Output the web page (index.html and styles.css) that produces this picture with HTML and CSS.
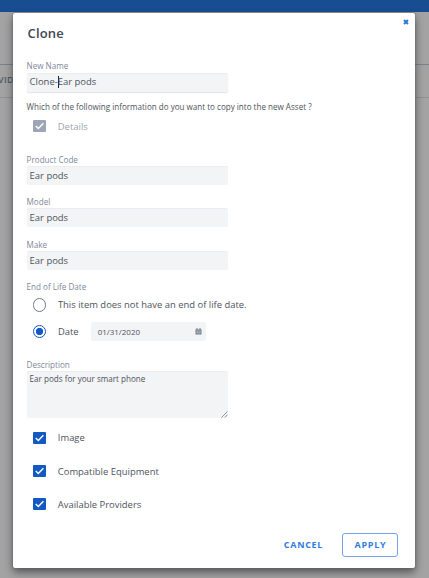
FILE: index.html
```html
<!DOCTYPE html>
<html lang="en">
<head>
<meta charset="utf-8">
<title>Clone</title>
<link rel="stylesheet" href="styles.css">
</head>
<body>
<div class="page">
  <div class="topbar"></div>
  <div class="subbar"></div>
  <div class="tabs"><span>VID</span></div>
</div>
<div class="modal">
  <svg class="close" viewBox="0 0 6 6"><path d="M1 1L5 5M5 1L1 5"/></svg>
  <h1>Clone</h1>
  <div class="label name-label"><span>New Name</span></div>
  <div class="field focus"><span>Clone-<i class="caret"></i>Ear pods</span></div>
  <p class="question"><span>Which of the following information do you want to copy into the new Asset ?</span></p>
  <div class="option disabled"><svg class="check" viewBox="0 0 13 12"><rect width="13" height="12" rx="1"/><path d="M2.8 6L5.3 8.5L10.4 3.3"/></svg><span>Details</span></div>
  <div class="label code-label"><span>Product Code</span></div>
  <div class="field"><span>Ear pods</span></div>
  <div class="label model-label"><span>Model</span></div>
  <div class="field"><span>Ear pods</span></div>
  <div class="label make-label"><span>Make</span></div>
  <div class="field"><span>Ear pods</span></div>
  <div class="label life-label"><span>End of Life Date</span></div>
  <div class="option life"><i class="radio"></i><span class="life-text">This item does not have an end of life date.</span></div>
  <div class="option date"><i class="radio on"></i><span>Date</span>
    <div class="date-field"><span>01/31/2020</span><svg class="calendar" viewBox="0 0 8 8"><path d="M.5 1.5h7v6h-7z"/><path d="M1.6 0h1.3v2H1.6zM5.1 0h1.3v2H5.1z"/><path class="grid" d="M1 3.3h6M1 5.3h6M2.7 3.3v4M5.3 3.3v4"/></svg></div>
  </div>
  <div class="label desc-label"><span>Description</span></div>
  <div class="area"><span>Ear pods for your smart phone</span><svg class="grip" viewBox="0 0 7 7"><path d="M.5 6.5L6.5 .5M3.8 6.5L6.5 3.8"/></svg></div>
  <div class="option first"><svg class="check" viewBox="0 0 13 12"><rect width="13" height="12" rx="1"/><path d="M2.8 6L5.3 8.5L10.4 3.3"/></svg><span>Image</span></div>
  <div class="option"><svg class="check" viewBox="0 0 13 12"><rect width="13" height="12" rx="1"/><path d="M2.8 6L5.3 8.5L10.4 3.3"/></svg><span>Compatible Equipment</span></div>
  <div class="option"><svg class="check" viewBox="0 0 13 12"><rect width="13" height="12" rx="1"/><path d="M2.8 6L5.3 8.5L10.4 3.3"/></svg><span>Available Providers</span></div>
  <div class="actions"><span class="cancel">CANCEL</span><span class="apply">APPLY</span></div>
</div>
</body>
</html>
```
FILE: styles.css
```css
* { box-sizing: border-box; }
body { margin: 0; width: 429px; height: 578px; overflow: hidden; position: relative; background: #a3a3a3; font-family: "Open Sans", sans-serif; color: #4e535c; }
.topbar { height: 12px; background: #194d91; }
.subbar { height: 53px; border-bottom: 1px solid #7b828a; }
.tabs { height: 33px; border-bottom: 1px solid #8f9294; font-size: 9px; font-weight: 600; line-height: 30px; letter-spacing: .3px; color: #535860; }
.tabs span { margin-left: -2px; }
.modal { position: absolute; left: 13px; top: 12.5px; width: 402px; height: 555.5px; padding: 0 13.6px; background: #fff; border-radius: 2px; box-shadow: 0 0 1px 1px rgba(95,105,120,.35), 0 4px 8px rgba(0,0,0,.5); display: flex; flex-direction: column; }
.close { position: absolute; left: 389.5px; top: 6.5px; width: 6px; height: 6px; fill: none; stroke: #2c78da; stroke-width: 2; }
h1 { margin: 9.5px 0 0 1px; height: 22px; line-height: 22px; font-size: 13px; font-weight: 600; letter-spacing: .15px; color: #41464f; }
.label { height: 12px; line-height: 12px; font-size: 8.1px; color: #7d8898; white-space: nowrap; position: relative; top: .6px; }
.name-label { margin-top: 15.5px; }
.field { width: 201.5px; height: 19px; line-height: 18px; padding-left: 3px; margin-top: 1px; background: #f3f4f6; border-top: 1px solid #eaecef; border-radius: 2px; font-size: 9.45px; white-space: nowrap; }
.focus { line-height: 15.5px; box-shadow: 0 1px 1px rgba(100,110,125,.2); }
.caret { display: inline-block; width: 1px; height: 12px; margin-right: -1px; background: #222; vertical-align: -3px; }
.question { margin: 9.1px 0 0; height: 12px; line-height: 12px; font-size: 8.07px; white-space: nowrap; }
.option { display: flex; align-items: center; height: 20px; margin: 0 0 13.3px 6px; font-size: 9.43px; white-space: nowrap; flex: none; }
.option > span { margin-left: 12.2px; }
.check { width: 13px; height: 12px; margin-left: .2px; margin-right: -.2px; fill: #1259c3; }
.check path { fill: none; stroke: #fff; stroke-width: 1.4; }
.disabled { margin-top: 3.5px; margin-bottom: 0; color: #9aa4b3; }
.disabled .check { fill: #9ca6b6; }
.code-label { margin-top: 16.9px; }
.model-label, .make-label, .life-label { margin-top: 10.5px; }
.life { margin-top: 2.5px; margin-bottom: 6.5px; }
.date { margin-bottom: 0; }
.radio { width: 13.5px; height: 13.5px; border: 1.5px solid #707b8b; border-radius: 50%; }
.option > .radio + span { margin-left: 11.8px; }
.radio.on { border-color: #1259c3; background: radial-gradient(circle, #1259c3 3.3px, #fff 4px); }
.date-field { display: flex; align-items: center; justify-content: space-between; width: 115px; height: 19px; margin-left: 12.5px; padding: 0 4px 0 6.5px; background: #f3f4f6; border-radius: 2px; font-size: 8px; }
.calendar { width: 7px; height: 7px; fill: #7e8894; }
.calendar .grid { stroke: #bcc3ca; stroke-width: .5; }
.desc-label { margin-top: 16.8px; }
.area { position: relative; width: 201.5px; height: 47px; margin-top: .6px; padding: 1px 3px; background: #f3f4f6; border-top: 1px solid #eaecef; border-radius: 2px; font-size: 8.08px; line-height: 12px; }
.area span { display: block; }
.grip { position: absolute; right: 0; bottom: 0; width: 7px; height: 7px; stroke: #777; stroke-width: .8; }
.first { margin-top: 10px; }
.actions { display: flex; align-items: center; justify-content: flex-end; margin: 5px 3px 0 0; color: #317cdf; font-size: 9px; font-weight: 700; letter-spacing: .7px; }
.cancel { margin-right: 19.3px; }
.apply { width: 56px; height: 24px; line-height: 22px; text-align: center; border: 1px solid #71a5ea; border-radius: 3px; }
```
